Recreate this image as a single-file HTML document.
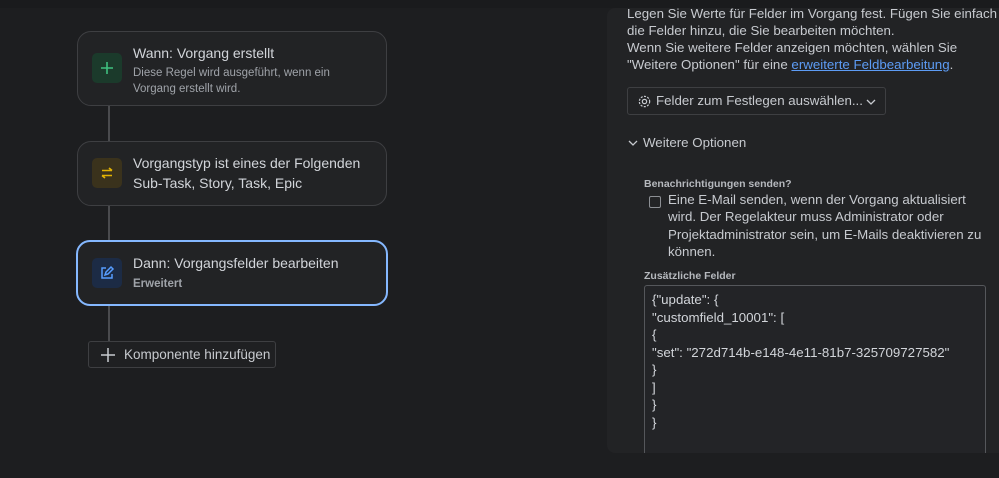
<!DOCTYPE html>
<html><head><meta charset="utf-8"><style>
*{box-sizing:border-box;margin:0;padding:0}
body{width:999px;height:478px;overflow:hidden;background:#1d1e20;font-family:"Liberation Sans",sans-serif;color:#c7cacf;position:relative}
.card{position:absolute;left:77px;width:310px;background:#222325;border:1px solid #3e3f42;border-radius:14px}
.ic{position:absolute;left:14px;width:30px;height:30px;border-radius:5px;display:flex;align-items:center;justify-content:center}
.t{position:absolute;left:55px;font-size:14px;color:#d2d5da;white-space:nowrap}
.s{position:absolute;left:55px;font-size:11.5px;color:#9fa3a9;line-height:16px;white-space:nowrap}
.line{position:absolute;left:108px;width:2px;background:#4a4b4e}
.panel{position:absolute;left:607px;top:8px;width:400px;height:445px;background:#222325;border-radius:8px}
.p{position:absolute;font-size:13.3px;line-height:17px;color:#c7cacf;white-space:nowrap}
a{color:#5d9cf5;text-decoration:underline}
</style></head><body>
<div style="position:absolute;left:0;top:0;width:999px;height:8px;background:#1a1b1d"></div>
<div class="line" style="top:104px;height:38px"></div>
<div class="line" style="top:204px;height:38px"></div>
<div class="line" style="top:304px;height:38px"></div>
<div class="card" style="top:31px;height:75px">
 <div class="ic" style="top:21px;background:#1b3a2b"><svg width="16" height="16"><path d="M8 2v12M2 8h12" stroke="#3fbf7f" stroke-width="1.6"/></svg></div>
 <div class="t" style="top:13px">Wann: Vorgang erstellt</div>
 <div class="s" style="top:33px">Diese Regel wird ausgeführt, wenn ein<br>Vorgang erstellt wird.</div>
</div>
<div class="card" style="top:141px;height:65px">
 <div class="ic" style="top:16px;background:#3a321c"><svg width="16" height="16"><path d="M3 5.5h10M10 3l3 2.5M13 10.5H3M6 13l-3-2.5" stroke="#e2b203" stroke-width="1.6" fill="none"/></svg></div>
 <div class="t" style="top:13px">Vorgangstyp ist eines der Folgenden</div>
 <div class="t" style="top:33px">Sub-Task, Story, Task, Epic</div>
</div>
<div class="card" style="top:240px;height:66px;border:2px solid #85b8ff;left:76px;width:312px">
 <div class="ic" style="top:16px;background:#1c2b45"><svg width="16" height="16"><path d="M7 3H3v10h10V9M6 10l1-3 5-5 2 2-5 5z" stroke="#579dff" stroke-width="1.5" fill="none"/></svg></div>
 <div class="t" style="top:13px">Dann: Vorgangsfelder bearbeiten</div>
 <div class="s" style="top:34px;font-weight:bold;color:#9fa3a9">Erweitert</div>
</div>
<div style="position:absolute;left:88px;top:341px;width:188px;height:27px;border:1px solid #3e3f42;border-radius:3px;background:#1f2022">
 <svg style="position:absolute;left:12px;top:6px" width="14" height="14"><path d="M7 0v14M0 7h14" stroke="#c7cacf" stroke-width="1.5"/></svg>
 <div style="position:absolute;left:35px;top:5px;font-size:13.5px;color:#c7cacf;white-space:nowrap">Komponente hinzufügen</div>
</div>
<div class="panel"></div>
<div class="p" style="left:627px;top:5px">Legen Sie Werte für Felder im Vorgang fest. Fügen Sie einfach</div>
<div class="p" style="left:627px;top:22px">die Felder hinzu, die Sie bearbeiten möchten.</div>
<div class="p" style="left:627px;top:39px">Wenn Sie weitere Felder anzeigen möchten, wählen Sie</div>
<div class="p" style="left:627px;top:56px">"Weitere Optionen" für eine <a>erweiterte Feldbearbeitung</a>.</div>
<div style="position:absolute;left:627px;top:87px;width:259px;height:28px;border:1px solid #3e3f42;border-radius:3px">
 <svg style="position:absolute;left:9px;top:6px" width="15" height="15" viewBox="0 0 16 16"><circle cx="8" cy="8" r="2.3" fill="none" stroke="#c7cacf" stroke-width="1.3"/><circle cx="8" cy="8" r="5.5" fill="none" stroke="#c7cacf" stroke-width="1.3" stroke-dasharray="2.2 1.4"/></svg>
 <div style="position:absolute;left:28px;top:5px;font-size:13.3px;white-space:nowrap">Felder zum Festlegen auswählen...</div>
 <svg style="position:absolute;left:238px;top:11px" width="10" height="6"><path d="M1 1l4 4 4-4" stroke="#c7cacf" stroke-width="1.3" fill="none"/></svg>
</div>
<svg style="position:absolute;left:628px;top:140px" width="10" height="6"><path d="M1 1l4 4 4-4" stroke="#c7cacf" stroke-width="1.3" fill="none"/></svg>
<div class="p" style="left:643px;top:134px">Weitere Optionen</div>
<div class="p" style="left:644px;top:176px;font-size:10.5px;font-weight:bold;color:#b6b9be">Benachrichtigungen senden?</div>
<div style="position:absolute;left:649px;top:196px;width:12px;height:12px;border:1.5px solid #8c8f94;border-radius:2px"></div>
<div class="p" style="left:668px;top:191px">Eine E-Mail senden, wenn der Vorgang aktualisiert</div>
<div class="p" style="left:668px;top:208px">wird. Der Regelakteur muss Administrator oder</div>
<div class="p" style="left:668px;top:226px">Projektadministrator sein, um E-Mails deaktivieren zu</div>
<div class="p" style="left:668px;top:243px">können.</div>
<div class="p" style="left:644px;top:268px;font-size:10.5px;font-weight:bold;color:#b6b9be">Zusätzliche Felder</div>
<div style="position:absolute;left:644px;top:285px;width:342px;height:168px;border:1px solid #55575b;border-bottom:none;border-radius:3px 3px 0 0;background:#232427;padding:5px 7px;font-size:13.3px;line-height:17.5px;color:#d2d5da;white-space:pre">{"update": {
"customfield_10001": [
{
"set": "272d714b-e148-4e11-81b7-325709727582"
}
]
}
}</div>
</body></html>
